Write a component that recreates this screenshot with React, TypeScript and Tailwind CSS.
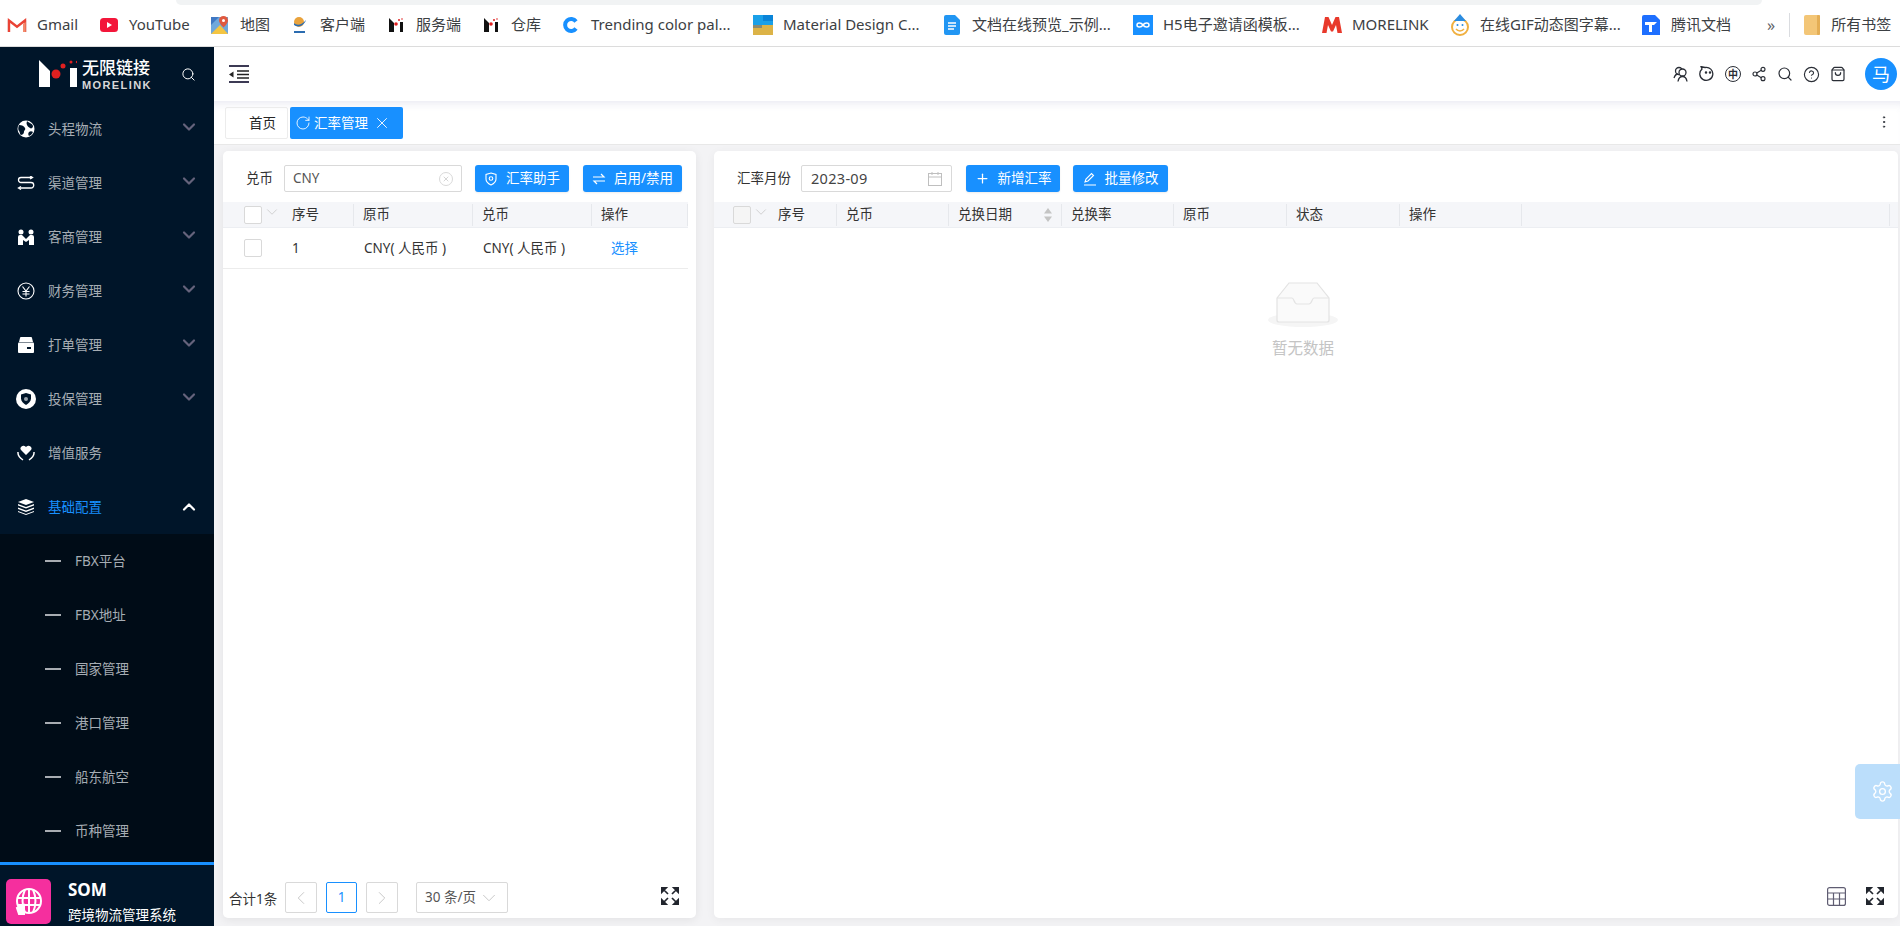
import React from 'react';
import {
  ChevronDown,
  ChevronLeft,
  ChevronRight,
  ChevronUp,
  CircleHelp,
  EllipsisVertical,
  Plus,
  RotateCw,
  Search,
  Settings,
  Share2,
  ShoppingBag,
  X,
} from 'lucide-react';

/* ---------- bookmark icons ---------- */
const GmailIcon = () => (
  <svg viewBox="0 0 20 16" className="w-5 h-4">
    <path d="M1 15V3l9 7 9-7v12" fill="none" stroke="#e0e0e0" strokeWidth="1" />
    <path d="M2 15V3.5l8 6.2 8-6.2V15" fill="none" stroke="#ea4335" strokeWidth="2.4" />
    <path d="M16 15h2.6V5l-2.6 2z" fill="#f28b6d" />
  </svg>
);
const YoutubeIcon = () => (
  <svg viewBox="0 0 18 14" className="w-[18px] h-[14px]">
    <rect width="18" height="14" rx="3.5" fill="#f3163a" />
    <path d="M7 4l5 3-5 3z" fill="#fff" />
  </svg>
);
const MapIcon = () => (
  <svg viewBox="0 0 18 18" className="w-[18px] h-[18px]">
    <rect y="1" width="17" height="17" fill="#6fa8dc" />
    <path d="M0 18l9-9 8 9z" fill="#f4c542" />
    <path d="M0 1h8L0 9z" fill="#3f78c4" />
    <path d="M12.5 0a4.5 4.5 0 0 1 4.5 4.5c0 3-4.5 7-4.5 7S8 7.500 8 4.500A4.500 4.500 0 0 1 12.500 0z" fill="#e0593f" />
    <circle cx="12.500" cy="4.500" r="1.500" fill="#fff" />
  </svg>
);
const ClientIcon = () => (
  <svg viewBox="0 0 14 18" className="w-[14px] h-[18px]">
    <circle cx="6" cy="6" r="5" fill="#e9a23b" />
    <path d="M1 7c3 3 8 2 12-3-2 6-8 8-12 5z" fill="#2b6cb0" />
    <rect x="1" y="15" width="11" height="2" fill="#2b6cb0" />
  </svg>
);
const MlIcon = () => (
  <svg viewBox="0 0 16 16" className="w-4 h-4">
    <path d="M1 1l5 5v9H1z" fill="#111" />
    <rect x="12" y="5" width="3" height="10" fill="#111" />
    <circle cx="8" cy="7" r="1.800" fill="#e02020" />
    <circle cx="11" cy="3" r="1" fill="#e02020" />
    <circle cx="14" cy="2" r=".8" fill="#e02020" />
  </svg>
);
const CoolorsIcon = () => (
  <svg viewBox="0 0 18 18" className="w-[18px] h-[18px]">
    <path d="M14 5.500A6 6 0 1 0 14 12.500" fill="none" stroke="#1890ff" strokeWidth="4" />
  </svg>
);
const MaterialIcon = () => (
  <svg viewBox="0 0 20 20" className="w-5 h-5">
    <rect width="20" height="10" fill="#1aa0e8" />
    <rect x="10" width="10" height="6" fill="#0a84d8" />
    <rect y="10" width="20" height="10" fill="#dcb347" />
    <rect y="10" width="9" height="3" fill="#8c8a70" />
  </svg>
);
const DocIcon = () => (
  <svg viewBox="0 0 16 20" className="w-4 h-5">
    <path d="M2 0h9l5 5v13a2 2 0 0 1-2 2H2a2 2 0 0 1-2-2V2a2 2 0 0 1 2-2z" fill="#2196f3" />
    <path d="M4 8h8M4 11h8M4 14h6" stroke="#fff" strokeWidth="1.300" />
  </svg>
);
const H5Icon = () => (
  <svg viewBox="0 0 20 20" className="w-5 h-5">
    <rect width="20" height="20" fill="#1890ff" />
    <path d="M10 10c-2-3-6-2.500-6 0s4 3 6 0 6-2.500 6 0-4 3-6 0z" fill="none" stroke="#fff" strokeWidth="1.500" />
  </svg>
);
const MRedIcon = () => (
  <svg viewBox="0 0 20 16" className="w-5 h-4">
    <path d="M0 16L3 0h3.500L10 8l3.500-8H17l3 16h-4.500L14 8l-3 6.500H9L6 8l-1.500 8z" fill="#e8392b" />
  </svg>
);
const GifIcon = () => (
  <svg viewBox="0 0 20 24" className="w-5 h-6">
    <circle cx="10" cy="14" r="8" fill="#fff" stroke="#f0b040" strokeWidth="2" />
    <path d="M10 1l6 7H4z" fill="#2b8ce0" />
    <circle cx="7.500" cy="12" r="1" fill="#2b8ce0" />
    <circle cx="12.500" cy="12" r="1" fill="#2b8ce0" />
    <path d="M6 16c2 2.500 6 2.500 8 0" fill="none" stroke="#f0b040" strokeWidth="1.500" />
  </svg>
);
const TencentDocIcon = () => (
  <svg viewBox="0 0 18 20" className="w-[18px] h-5">
    <path d="M0 2a2 2 0 0 1 2-2h11l5 5v15H0z" fill="#1e6fff" />
    <path d="M3 7h12l-3 3H10v7H7v-7H3z" fill="#fff" />
  </svg>
);
const FolderIcon = () => (
  <svg viewBox="0 0 16 20" className="w-4 h-5">
    <rect width="16" height="20" rx="2" fill="#f3c677" />
    <rect x="13" y="0" width="3" height="20" rx="1" fill="#e4ae55" />
  </svg>
);

/* ---------- sidebar icons ---------- */
const GlobeIcon = () => (
  <svg viewBox="0 0 18 18" className="w-[18px] h-[18px]">
    <circle cx="9" cy="9" r="8.500" fill="#fff" />
    <path d="M2 5c3 0 5 1 6 3s-1 2-1 4-2 3-3 3-1-3-2-4-1-4 0-6zM10 1c2 2 5 2 6 5 0 2-2 3-3 2s-2-1-3-3 0-3 0-4zM12 12c1-1 3-1 4 0-1 2-2 3-4 4-1-1-1-3 0-4z" fill="#001529" />
  </svg>
);
const RouteIcon = () => (
  <svg viewBox="0 0 18 14" className="w-[18px] h-[14px]" fill="none" stroke="#fff" strokeWidth="1.300">
    <path d="M15 1.500H4a2.500 2.500 0 0 0 0 5h10a2.700 2.700 0 0 1 0 5.500H2" />
    <path d="M13 0l2.500 1.500L13 3M4 10.500L1.500 12 4 13.500" />
  </svg>
);
const PartnerIcon = () => (
  <svg viewBox="0 0 16 16" className="w-4 h-4" fill="#fff">
    <circle cx="3" cy="3" r="2.500" />
    <circle cx="13" cy="3" r="2.500" />
    <path d="M0 16V8a2 2 0 0 1 2-2h2l4 4 4-4h2a2 2 0 0 1 2 2v8h-5V11L8 13l-3-2v5z" />
  </svg>
);
const YenIcon = () => (
  <svg viewBox="0 0 18 18" className="w-[18px] h-[18px]" fill="none" stroke="#fff" strokeWidth="1.100">
    <circle cx="9" cy="9" r="8" />
    <path d="M5.500 4.500L9 9l3.500-4.500M5.500 9.500h7M5.500 12h7M9 9v5.500" />
  </svg>
);
const BoxIcon = () => (
  <svg viewBox="0 0 16 16" className="w-4 h-4">
    <path d="M1 5l1-4a1 1 0 0 1 1-1h10a1 1 0 0 1 1 1l1 4z" fill="#fff" />
    <rect y="5.500" width="16" height="10.500" rx="1" fill="#fff" />
    <rect x="9" y="10" width="4" height="2" fill="#001529" />
  </svg>
);
const ShieldIcon = () => (
  <svg viewBox="0 0 20 20" className="w-5 h-5">
    <circle cx="10" cy="10" r="10" fill="#fff" />
    <path d="M10 4l5 1.500v4c0 3-2.500 5-5 6.500-2.500-1.500-5-3.500-5-6.500v-4z" fill="#001529" />
    <circle cx="10" cy="10" r="2" fill="#9aa3ad" />
  </svg>
);
const HeartHandIcon = () => (
  <svg viewBox="0 0 18 16" className="w-[18px] h-4">
    <path d="M9 10L4.500 5.500a2.700 2.700 0 0 1 0-4 3 3 0 0 1 4.500.500 3 3 0 0 1 4.500-.500 2.700 2.700 0 0 1 0 4z" fill="#fff" />
    <path d="M1 7c-.5 4 2 6 5 8M17 7c.5 4-2 6-5 8" fill="none" stroke="#fff" strokeWidth="1.500" />
  </svg>
);
const LayersIcon = () => (
  <svg viewBox="0 0 16 16" className="w-4 h-4" fill="#fff">
    <path d="M8 0l8 3-8 3-8-3z" />
    <path d="M0 5l8 3 8-3v1.600l-8 3-8-3zM0 8.500l8 3 8-3v1.600l-8 3-8-3zM0 12l8 3 8-3v1l-8 3-8-3z" />
  </svg>
);

/* ---------- small shared icons ---------- */
const ExpandIcon = () => (
  <svg viewBox="0 0 18 18" className="w-[18px] h-[18px]" fill="#22262e" stroke="#22262e" strokeWidth="1.700">
    <path d="M0 0h6L0 6zM3 3l4 4M18 0v6l-6-6zM15 3l-4 4M0 18v-6l6 6zM3 15l4-4M18 18h-6l6-6zM15 15l-4-4" strokeLinejoin="miter" />
  </svg>
);
const TableIcon = () => (
  <svg viewBox="0 0 19 19" className="w-[19px] h-[19px]" fill="none" stroke="#5f5d72" strokeWidth="1.200">
    <rect x=".6" y=".6" width="17.800" height="17.800" rx="2" />
    <path d="M.6 6h17.800M.6 12h17.800M6.500 6v12.400M12.500 6v12.400" />
  </svg>
);
const Checkbox = ({ muted }: { muted?: boolean }) => (
  <span className={`block w-[18px] h-[18px] rounded-[2px] border border-[#d9d9d9] ${muted ? 'bg-[#f5f5f5]' : 'bg-white'}`} />
);

/* ---------- data ---------- */
const bookmarks = [
  { icon: <GmailIcon />, title: 'Gmail', width: 'w-[92px]' },
  { icon: <YoutubeIcon />, title: 'YouTube', width: 'w-[111px]' },
  { icon: <MapIcon />, title: '地图', width: 'w-[80px]' },
  { icon: <ClientIcon />, title: '客户端', width: 'w-[96px]' },
  { icon: <MlIcon />, title: '服务端', width: 'w-[95px]' },
  { icon: <MlIcon />, title: '仓库', width: 'w-[80px]' },
  { icon: <CoolorsIcon />, title: 'Trending color pal...', width: 'w-[192px]' },
  { icon: <MaterialIcon />, title: 'Material Design C...', width: 'w-[189px]' },
  { icon: <DocIcon />, title: '文档在线预览_示例...', width: 'w-[191px]' },
  { icon: <H5Icon />, title: 'H5电子邀请函模板...', width: 'w-[189px]' },
  { icon: <MRedIcon />, title: 'MORELINK', width: 'w-[128px]' },
  { icon: <GifIcon />, title: '在线GIF动态图字幕...', width: 'w-[191px]' },
  { icon: <TencentDocIcon />, title: '腾讯文档', width: 'w-[126px]' },
];

const menus = [
  { icon: <GlobeIcon />, title: '头程物流', arrow: true },
  { icon: <RouteIcon />, title: '渠道管理', arrow: true },
  { icon: <PartnerIcon />, title: '客商管理', arrow: true },
  { icon: <YenIcon />, title: '财务管理', arrow: true },
  { icon: <BoxIcon />, title: '打单管理', arrow: true },
  { icon: <ShieldIcon />, title: '投保管理', arrow: true },
  { icon: <HeartHandIcon />, title: '增值服务', arrow: false },
];

const subMenus = ['FBX平台', 'FBX地址', '国家管理', '港口管理', '船东航空', '币种管理'];

const rateColumns = [
  { title: '兑币', width: 'w-[112px]' },
  { title: '兑换日期', width: 'w-[113px]', sort: true },
  { title: '兑换率', width: 'w-[112px]' },
  { title: '原币', width: 'w-[113px]' },
  { title: '状态', width: 'w-[113px]' },
  { title: '操作', width: 'w-[122px]' },
  { title: '', width: 'w-[368px]' },
];

function Sidebar() {
  return (
    <aside className="w-[214px] shrink-0 bg-[#001529] flex flex-col">
      {/* logo */}
      <div className="h-[55px] shrink-0 flex items-start pl-[39px] pt-[13px]">
        <svg viewBox="0 0 38 27" className="w-[38px] h-[27px] shrink-0">
          <path d="M0 0l11 11v16H0z" fill="#fff" />
          <rect x="31" y="8" width="7" height="19" fill="#fff" />
          <circle cx="17" cy="14" r="4.500" fill="#e02020" />
          <circle cx="24" cy="6" r="2.500" fill="#e02020" />
          <circle cx="32" cy="2" r="1.500" fill="#e02020" />
          <circle cx="38" cy="2" r="1.200" fill="#e02020" />
        </svg>
        <div className="ml-[5px] w-[70px] flex flex-col text-white font-['Liberation_Sans','Noto_Sans_CJK_SC',sans-serif]">
          <span className="text-[17px] leading-[17px] font-medium whitespace-nowrap">无限链接</span>
          <span className="mt-[2px] text-[11px] leading-[13px] font-bold tracking-[1.4px] text-[#d8d8d8] whitespace-nowrap">MORELINK</span>
        </div>
        <Search className="ml-[29px] mt-[7px] text-white" size={15} strokeWidth={1.6} />
      </div>

      {/* menu */}
      {menus.map((m) => (
        <div key={m.title} className="h-[54px] shrink-0 flex items-center">
          <span className="w-[48px] pl-[16px] flex items-center">
            <span className="w-5 flex justify-center">{m.icon}</span>
          </span>
          <span className="text-[13.5px] text-[#a6adb4]">{m.title}</span>
          {m.arrow && <ChevronDown className="ml-auto mr-[15px] -mt-[4px] text-[#65637c]" size={20} strokeWidth={2.6} />}
        </div>
      ))}
      <div className="h-[54px] shrink-0 flex items-center">
        <span className="w-[48px] pl-[16px] flex items-center">
          <span className="w-5 flex justify-center"><LayersIcon /></span>
        </span>
        <span className="text-[13.5px] text-[#1890ff]">基础配置</span>
        <ChevronUp className="ml-auto mr-[15px] text-white" size={20} strokeWidth={2.6} />
      </div>

      {/* sub menu */}
      <div className="flex-1 bg-[#000c17] flex flex-col">
        {subMenus.map((s) => (
          <div key={s} className="h-[54px] shrink-0 flex items-center pl-[45px]">
            <span className="w-4 h-[2px] bg-[#a8adb2]" />
            <span className="ml-[14px] text-[13.5px] text-[#a6adb4]">{s}</span>
          </div>
        ))}
      </div>

      {/* system */}
      <div className="h-[64px] shrink-0 border-t-[3px] border-[#1890ff] flex pl-[6px] pt-[14px]">
        <div className="w-[45px] h-[45px] rounded-[5px] bg-[#f52f9e] flex items-center justify-center">
          <svg viewBox="0 0 28 28" className="w-7 h-7" fill="none" stroke="#fff" strokeWidth="2">
            <circle cx="14" cy="13" r="12" />
            <path d="M2 10h24M2 17h24M10 1.500c-3 7-3 16 0 23M18 1.500c3 7 3 16 0 23M14 1v24" />
            <path d="M2 20l7-3v9H4z" fill="#fff" />
          </svg>
        </div>
        <div className="ml-[17px] -mt-[1px] flex flex-col text-white">
          <span className="text-[17px] leading-[24px] font-bold">SOM</span>
          <span className="mt-[3px] text-[13.5px] leading-[20px] whitespace-nowrap">跨境物流管理系统</span>
        </div>
      </div>
    </aside>
  );
}

function TopBar() {
  return (
    <header className="h-[54px] shrink-0 bg-white flex items-center pl-[15px] pr-[3px]">
      <svg viewBox="0 0 20 18" className="w-5 h-[18px]">
        <path d="M0 1h20M0 17h20" stroke="#3c3a54" strokeWidth="1.800" />
        <path d="M8 6h12M8 9.500h12M8 13h12" stroke="#222" strokeWidth="1.500" />
        <path d="M4.500 6.500v6L0 9.500z" fill="#222" />
      </svg>
      <div className="ml-auto flex items-center gap-[10px] text-[#2a2e36]">
        <svg viewBox="0 0 16 16" className="w-4 h-4" fill="none" stroke="currentColor" strokeWidth="1.300">
          <circle cx="6" cy="5" r="3.500" />
          <circle cx="9.500" cy="6.500" r="3.500" fill="#fff" />
          <path d="M1 12c1-3 3-4 4-4M5 15.500c.5-3 2-5 4.500-5s4 2 4.500 5" />
        </svg>
        <svg viewBox="0 0 16 16" className="w-4 h-4" fill="none" stroke="currentColor" strokeWidth="1.300">
          <path d="M3 3a6.500 6.500 0 1 0 3-1.500L2 .5z" />
          <circle cx="7" cy="6.500" r=".6" fill="currentColor" />
          <circle cx="11" cy="6.500" r=".6" fill="currentColor" />
        </svg>
        <span className="relative w-4 h-4 rounded-full border-[1.2px] border-[#2a2e36] flex items-center justify-center text-[10px] leading-none font-bold">中</span>
        <Share2 size={16} strokeWidth={1.7} />
        <Search size={16} strokeWidth={1.8} />
        <CircleHelp size={17} strokeWidth={1.6} />
        <ShoppingBag size={16} strokeWidth={1.8} />
        <div className="ml-[9px] w-[32px] h-[32px] rounded-full bg-[#1890ff] text-white text-[18px] flex items-center justify-center">马</div>
      </div>
    </header>
  );
}

function TabBar() {
  return (
    <div className="h-[44px] shrink-0 bg-white border-b border-[#e8e8e8] flex items-start pt-[6px] pl-[11px] pr-[8px] shadow-[inset_0_8px_8px_-6px_rgba(110,110,170,0.16)]">
      <div className="w-[63px] h-[32px] pl-[23px] rounded-[2px] border border-[#ececec] flex items-center text-[13.5px] text-[#262626]">首页</div>
      <div className="ml-[2px] w-[113px] h-[32px] pl-[5px] rounded-[2px] bg-[#1890ff] flex items-center text-[13.5px] text-white">
        <RotateCw size={16} strokeWidth={1.3} />
        <span className="ml-[3px]">汇率管理</span>
        <X className="ml-[5px]" size={18} strokeWidth={1.2} />
      </div>
      <EllipsisVertical className="ml-auto mt-[7px] text-[#30343c]" size={16} strokeWidth={1.5} />
    </div>
  );
}

const PrimaryButton = ({ icon, label, width }: { icon: React.ReactNode; label: string; width: string }) => (
  <button className={`${width} h-[27px] rounded-[3px] bg-[#1890ff] text-white text-[13.5px] flex items-center justify-center gap-[8px] shadow-[0_1px_2px_rgba(0,0,0,0.08)]`}>
    {icon}
    <span>{label}</span>
  </button>
);

const HeadCell = ({ width, children }: { width: string; children: React.ReactNode }) => (
  <div className={`${width} shrink-0 h-[22px] pl-[9px] border-r border-[#e6e8ec] flex items-center`}>{children}</div>
);

function CurrencyCard() {
  return (
    <section className="w-[473px] shrink-0 bg-white rounded-[5px] flex flex-col shadow-[0_2px_10px_rgba(0,0,0,0.07)]">
      <div className="h-[51px] shrink-0 flex items-start pt-[14px] pl-[23px] text-[13.5px] text-[#333]">
        <span className="w-[38px] leading-[27px]">兑币</span>
        <div className="w-[178px] h-[27px] rounded-[2px] border border-[#d9d9d9] flex items-center pl-[8px] pr-[8px] text-[#555]">
          <span>CNY</span>
          <span className="ml-auto w-[14px] h-[14px] rounded-full border border-[#d9d9d9] flex items-center justify-center text-[#bfbfbf]">
            <X size={8} strokeWidth={2} />
          </span>
        </div>
        <div className="ml-[13px]">
          <PrimaryButton
            width="w-[94px]"
            label="汇率助手"
            icon={
              <svg viewBox="0 0 14 14" className="w-[14px] h-[14px]" fill="none" stroke="#fff" strokeWidth="1.100">
                <path d="M7 1l5 1.500V7c0 3-2.500 4.800-5 6-2.500-1.200-5-3-5-6V2.500z" />
                <circle cx="7" cy="6.500" r="1.800" />
              </svg>
            }
          />
        </div>
        <div className="ml-[14px]">
          <PrimaryButton
            width="w-[99px]"
            label="启用/禁用"
            icon={
              <svg viewBox="0 0 14 12" className="w-[14px] h-3" fill="none" stroke="#fff" strokeWidth="1.200">
                <path d="M1 4h11L9 1M13 8H2l3 3" />
              </svg>
            }
          />
        </div>
      </div>

      <div className="flex-1 flex flex-col">
        <div className="w-[465px] h-[26px] shrink-0 bg-[#f5f6f9] border-b border-[#eceef2] flex items-center text-[13.5px] text-[#333]">
          <div className="w-[131px] shrink-0 h-[22px] pl-[21px] border-r border-[#e6e8ec] flex items-center">
            <Checkbox />
            <ChevronDown className="ml-[1px] -mt-[6px] text-[#c4c4c4]" size={18} strokeWidth={1} />
            <span className="ml-[11px]">序号</span>
          </div>
          <HeadCell width="w-[119px]">原币</HeadCell>
          <HeadCell width="w-[119px]">兑币</HeadCell>
          <HeadCell width="w-[96px]">操作</HeadCell>
        </div>
        <div className="w-[465px] h-[41px] shrink-0 border-b border-[#ececec] flex items-center text-[13.5px] text-[#333]">
          <div className="w-[131px] pl-[21px] flex items-center">
            <Checkbox />
            <span className="ml-[30px]">1</span>
          </div>
          <div className="w-[119px] pl-[10px] whitespace-nowrap">CNY( 人民币 )</div>
          <div className="w-[119px] pl-[10px] whitespace-nowrap">CNY( 人民币 )</div>
          <div className="pl-[19px] text-[#1890ff]">选择</div>
        </div>
      </div>

      <div className="h-[36px] shrink-0 flex items-start pl-[6px] text-[13.5px] text-[#333]">
        <span className="w-[56px] leading-[34px]">合计1条</span>
        <span className="w-[32px] h-[31px] rounded-[2px] border border-[#d9d9d9] flex items-center justify-center text-[#c4c4c4]">
          <ChevronLeft size={22} strokeWidth={1} />
        </span>
        <span className="ml-[9px] w-[31px] h-[31px] rounded-[2px] border border-[#1890ff] flex items-center justify-center text-[#1890ff]">1</span>
        <span className="ml-[9px] w-[32px] h-[31px] rounded-[2px] border border-[#d9d9d9] flex items-center justify-center text-[#c4c4c4]">
          <ChevronRight size={22} strokeWidth={1} />
        </span>
        <span className="ml-[18px] w-[92px] h-[31px] rounded-[2px] border border-[#d9d9d9] flex items-center pl-[8px] text-[#555]">
          30 条/页
          <ChevronDown className="ml-[2px] text-[#c4c4c4]" size={22} strokeWidth={1} />
        </span>
        <span className="ml-auto mr-[17px] mt-[5px]"><ExpandIcon /></span>
      </div>
    </section>
  );
}

function RateCard() {
  return (
    <section className="flex-1 ml-[18px] mr-[2px] bg-white rounded-[5px] flex flex-col shadow-[0_2px_10px_rgba(0,0,0,0.05)]">
      <div className="h-[51px] shrink-0 flex items-start pt-[14px] pl-[23px] text-[13.5px] text-[#333]">
        <span className="w-[54px] leading-[27px] whitespace-nowrap">汇率月份</span>
        <div className="ml-[10px] w-[151px] h-[27px] rounded-[2px] border border-[#d9d9d9] flex items-center pl-[9px] pr-[9px] text-[#444] text-[14.5px] tracking-[0.3px]">
          <span>2023-09</span>
          <svg viewBox="0 0 14 14" className="ml-auto w-[14px] h-[14px]" fill="none" stroke="#bfbfbf" strokeWidth="1">
            <rect x=".5" y="1.500" width="13" height="12" />
            <path d="M.5 5h13M4 0v3M10 0v3" />
          </svg>
        </div>
        <div className="ml-[14px]">
          <PrimaryButton width="w-[94px]" label="新增汇率" icon={<Plus size={15} strokeWidth={2} />} />
        </div>
        <div className="ml-[13px]">
          <PrimaryButton
            width="w-[95px]"
            label="批量修改"
            icon={
              <svg viewBox="0 0 14 14" className="w-[14px] h-[14px]" fill="none" stroke="#fff" strokeWidth="1.100">
                <path d="M2 10l1-3 5.500-5.500 2 2L5 9zM1 13h12" />
              </svg>
            }
          />
        </div>
      </div>

      <div className="h-[26px] shrink-0 bg-[#f5f6f9] border-b border-[#eceef2] flex items-center text-[13.5px] text-[#333]">
        <div className="w-[123px] shrink-0 h-[22px] pl-[19px] border-r border-[#e6e8ec] flex items-center">
          <Checkbox muted />
          <ChevronDown className="ml-[1px] -mt-[6px] text-[#c4c4c4]" size={18} strokeWidth={1} />
          <span className="ml-[8px]">序号</span>
        </div>
        {rateColumns.map((c) => (
          <HeadCell key={c.title || 'blank'} width={c.width}>
            <span>{c.title}</span>
            {c.sort && (
              <svg viewBox="0 0 8 14" className="ml-[32px] w-2 h-[14px]" fill="#c4c4c4">
                <path d="M4 0l4 5.500H0zM4 14l4-5.500H0z" />
              </svg>
            )}
          </HeadCell>
        ))}
      </div>

      {/* empty */}
      <div className="flex-1 flex flex-col items-center pt-[54px] pr-[6px]">
        <svg viewBox="0 0 70 46" className="w-[70px] h-[46px]">
          <ellipse cx="35" cy="38" rx="35" ry="7" fill="#f5f5f5" />
          <path d="M9 16L21 1h28l12 15v22a2 2 0 0 1-2 2H11a2 2 0 0 1-2-2z" fill="#fafafa" stroke="#e3e3e3" strokeWidth="1.200" />
          <path d="M9 16h15c2 0 2 6 5 6h12c3 0 3-6 5-6h15" fill="none" stroke="#e3e3e3" strokeWidth="1.200" />
        </svg>
        <span className="mt-[9px] text-[15.5px] leading-[22px] text-[#c4c4c4]">暂无数据</span>
      </div>

      <div className="h-[36px] shrink-0 flex items-start justify-end gap-[20px] pr-[14px] pt-[5px]">
        <TableIcon />
        <ExpandIcon />
      </div>
    </section>
  );
}

export default function App() {
  return (
    <div className="relative w-[1900px] h-[926px] overflow-hidden bg-white flex flex-col font-['Noto_Sans','Noto_Sans_CJK_SC',sans-serif]">
      {/* Bookmark bar */}
      <div className="h-[47px] shrink-0 bg-white border-b border-[#dcdcdc]">
        <div className="ml-[176px] w-[1586px] h-[5px] rounded-b-[6px] bg-[#f1f3f4]" />
        <div className="h-[39px] flex items-center pl-[7px] text-[15px] text-[#3c4043]">
          {bookmarks.map((b) => (
            <div key={b.title} className={`${b.width} shrink-0 flex items-center`}>
              <span className="w-5 flex justify-center">{b.icon}</span>
              <span className="ml-[10px] whitespace-nowrap">{b.title}</span>
            </div>
          ))}
          <span className="text-[#5f6368] text-[16px]">»</span>
          <span className="ml-[14px] w-px h-[24px] bg-[#dadce0]" />
          <span className="ml-[14px]"><FolderIcon /></span>
          <span className="ml-[11px] whitespace-nowrap">所有书签</span>
        </div>
      </div>

      <div className="flex-1 flex min-h-0">
        <Sidebar />
        <main className="flex-1 flex flex-col min-w-0 bg-[#f3f3f5]">
          <TopBar />
          <TabBar />
          <div className="flex-1 flex min-h-0 pl-[9px] pt-[6px] pb-[8px]">
            <CurrencyCard />
            <RateCard />
          </div>
        </main>
      </div>

      {/* floating settings handle */}
      <div className="absolute right-0 top-[764px] w-[45px] h-[55px] pl-[9px] rounded-l-[5px] bg-[#bbdefb] flex items-center justify-center text-white">
        <Settings size={23} strokeWidth={1.4} />
      </div>
    </div>
  );
}
